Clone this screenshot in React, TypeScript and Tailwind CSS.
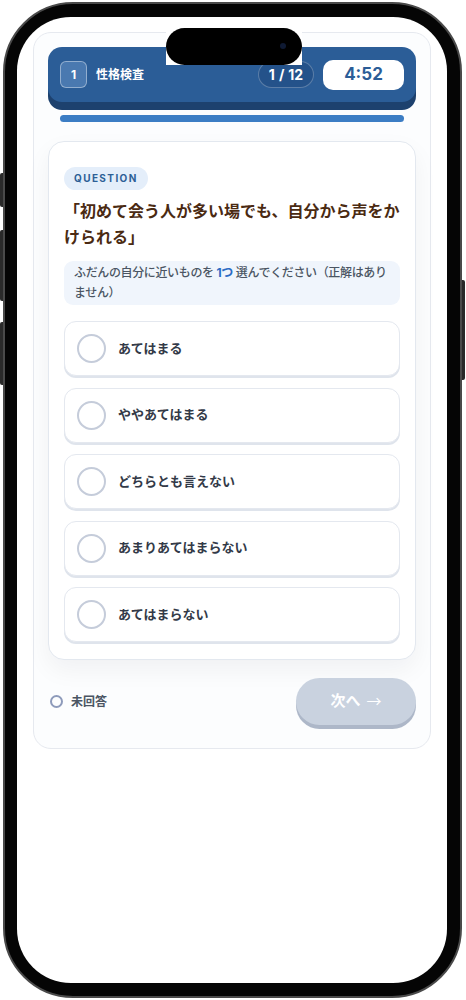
const options = ['あてはまる', 'ややあてはまる', 'どちらとも言えない', 'あまりあてはまらない', 'あてはまらない'];

const font = { fontFamily: '"Inter", "Noto Sans CJK JP", sans-serif' };

function Option({ label }: { label: string }) {
  return (
    <button className="flex h-[55px] w-full items-center gap-[12px] rounded-[12px] border border-[#e4e8ef] bg-white pl-[12px] text-left shadow-[0_2px_0_#dfe4ec]">
      <span className="h-[29px] w-[29px] shrink-0 rounded-full border-2 border-[#c5ccda]" />
      <span className="text-[13px] font-bold text-[#333a48]">{label}</span>
    </button>
  );
}

export default function App() {
  return (
    <div className="relative h-[1000px] w-[466px] bg-white" style={font}>
      {/* side buttons */}
      <div className="absolute left-[0px] top-[173px] h-[34px] w-[4px] rounded-l-[2px] bg-[#2a2a2a]" />
      <div className="absolute left-[0px] top-[230px] h-[71px] w-[4px] rounded-l-[2px] bg-[#2a2a2a]" />
      <div className="absolute left-[0px] top-[322px] h-[63px] w-[4px] rounded-l-[2px] bg-[#2a2a2a]" />
      <div className="absolute right-[1px] top-[280px] h-[100px] w-[4px] rounded-r-[2px] bg-[#2a2a2a]" />

      <div className="absolute left-[3px] top-[2px] h-[996px] w-[459px] rounded-[70px] border-[2px] border-[#4a4a4a] bg-[#050505] pb-[13px] pl-[12px] pr-[13px] pt-[13px]">
        <div className="relative h-full w-full overflow-hidden rounded-[54px] bg-white">
          {/* dynamic island */}
          <div className="absolute left-[149px] top-[11px] z-10 h-[37px] w-[136px] bg-white">
            <div className="relative h-full w-full rounded-[19px] bg-black">
              <span className="absolute right-[16px] top-[15px] h-[6px] w-[6px] rounded-full bg-[#0f1a33]" />
            </div>
          </div>

          <div className="px-4 pt-[15px]">
            <div className="rounded-[18px] border border-[#e6e9ef] bg-[#fcfdfe] px-[14px] pb-[23px] pt-[14px]">
              {/* header */}
              <div className="flex h-[55px] items-center rounded-[14px] bg-[#2b5d97] px-[12px] shadow-[0_8px_0_#1d416e]">
                <div className="flex h-[27px] w-[27px] items-center justify-center rounded-[6px] border border-white/40 bg-[#4a79b0] text-[12px] font-bold text-white">
                  1
                </div>
                <span className="ml-[9px] text-[12px] font-bold text-white">性格検査</span>
                <div className="ml-auto flex h-[27px] w-[56px] items-center justify-center gap-[4px] rounded-full border border-white/25 bg-[#24528a] text-[14px] font-bold text-white">
                  <span>1</span>
                  <span>/</span>
                  <span>12</span>
                </div>
                <div className="ml-[9px] flex h-[30px] w-[81px] items-center justify-center rounded-[10px] bg-white text-[17px] font-bold text-[#2b5d97]">
                  4:52
                </div>
              </div>

              {/* progress */}
              <div className="mx-[12px] mt-[13px] h-[7px] rounded-full bg-[#3c7dc4]" />

              {/* question card */}
              <div className="mt-[19px] rounded-[16px] border border-[#e3e8ef] bg-white px-[15px] pb-[17px] pt-[22px] shadow-[0_10px_24px_rgba(15,23,42,0.05)]">
                <span className="inline-flex h-[23px] items-center rounded-full bg-[#e4eefa] px-[10px] text-[10px] font-bold tracking-[0.14em] text-[#2d5f96]">
                  QUESTION
                </span>
                <p className="mt-[8px] text-[16px] font-bold leading-[26px] text-[#4a2a12]">
                  「初めて会う人が多い場でも、自分から声をかけられる」
                </p>
                <div className="mt-[11px] rounded-[9px] bg-[#f0f5fc] px-[10px] py-[2px] text-[12px] font-medium leading-[20px] tracking-[-0.03em] text-[#4b5563]">
                  ふだんの自分に近いものを <span className="font-bold text-[#2a6bc4]">1つ</span> 選んでください（正解はありません）
                </div>

                <div className="mt-[16px] flex flex-col gap-[11.5px]">
                  {options.map((o) => (
                    <Option key={o} label={o} />
                  ))}
                </div>
              </div>

              {/* footer */}
              <div className="mt-[18px] flex items-center">
                <span className="ml-[2px] h-[13px] w-[13px] rounded-full border-2 border-[#8e9bbb]" />
                <span className="ml-[8px] text-[12px] font-bold text-[#4b5563]">未回答</span>
                <button className="ml-auto flex h-[47px] w-[120px] items-center justify-center gap-[6px] rounded-full bg-[#c9d2df] text-[15px] font-bold text-white shadow-[0_4px_0_#adb7c8]">
                  <span>次へ</span>
                  <span className="font-normal" style={{ fontFamily: '"Noto Sans CJK JP", sans-serif' }}>→</span>
                </button>
              </div>
            </div>
          </div>
        </div>
      </div>
    </div>
  );
}
